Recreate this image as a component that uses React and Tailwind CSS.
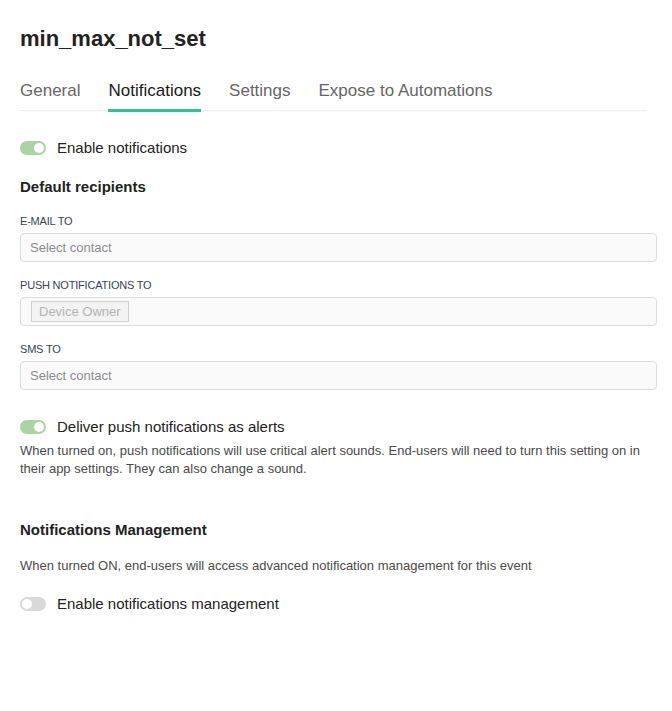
import React from "react";

function Toggle({ on, label }) {
  return (
    <div className="flex items-center gap-[11px]">
      <span className={`relative inline-flex h-[14px] w-[26px] items-center rounded-full ${on ? "bg-[#a8d5a2]" : "bg-[#d9d9d9]"}`}>
        <span className={`absolute h-[10px] w-[10px] rounded-full bg-white ${on ? "right-[2px]" : "left-[2px]"}`} />
      </span>
      <span className="text-[15px] text-[#222]">{label}</span>
    </div>
  );
}

function Field({ label, children }) {
  return (
    <div className="flex flex-col">
      <label className="text-[11px] uppercase text-[#3a4350] leading-[14px] tracking-[-0.2px]">{label}</label>
      <div className="mt-[5px] flex h-[29px] items-center rounded-[4px] border border-[#dcdcdc] bg-[#fafafa] px-[9px]">
        {children}
      </div>
    </div>
  );
}

export default function App() {
  const tabs = ["General", "Notifications", "Settings", "Expose to Automations"];
  return (
    <div className="min-h-[711px] bg-white pl-[20px] pr-[14px] pt-[26px] font-['Liberation_Sans',Arial,sans-serif]">
      <h1 className="text-[22px] font-bold leading-[26px] text-[#222]">min_max_not_set</h1>

      <div className="mt-[28px] mr-[11px] flex gap-[28px] border-b border-[#ececec]">
        {tabs.map((t, i) => (
          <div
            key={t}
            className={`pb-[7px] text-[17px] leading-[22px] ${i === 1 ? "border-b-[3px] border-[#2ec48f] text-[#1a1a1a] mb-[-2px]" : "text-[#666] mb-[1px]"}`}
          >
            {t}
          </div>
        ))}
      </div>

      <div className="mt-[26px]">
        <Toggle on label="Enable notifications" />
      </div>

      <h2 className="mt-[16px] text-[15px] font-semibold text-[#222]">Default recipients</h2>

      <div className="mt-[16px] flex flex-col gap-[16px] pr-[1px]">
        <Field label="E-mail to">
          <span className="text-[13px] text-[#8c8c8c]">Select contact</span>
        </Field>
        <Field label="Push notifications to">
          <span className="ml-[1px] inline-flex h-[21px] items-center border border-[#d0d0d0] bg-[#f3f3f3] px-[7px] text-[13px] text-[#b3b3b3]">
            Device Owner
          </span>
        </Field>
        <Field label="SMS to">
          <span className="text-[13px] text-[#8c8c8c]">Select contact</span>
        </Field>
      </div>

      <div className="mt-[26px]">
        <Toggle on label="Deliver push notifications as alerts" />
      </div>
      <p className="mt-[3px] text-[13px] leading-[18px] text-[#4a4a4a]">
        When turned on, push notifications will use critical alert sounds. End-users will need to turn this setting on in their app settings. They can also change a sound.
      </p>

      <h2 className="mt-[41px] text-[15px] font-semibold text-[#222]">Notifications Management</h2>
      <p className="mt-[16px] text-[13px] leading-[18px] text-[#4a4a4a]">
        When turned ON, end-users will access advanced notification management for this event
      </p>
      <div className="mt-[18px]">
        <Toggle label="Enable notifications management" />
      </div>
    </div>
  );
}
